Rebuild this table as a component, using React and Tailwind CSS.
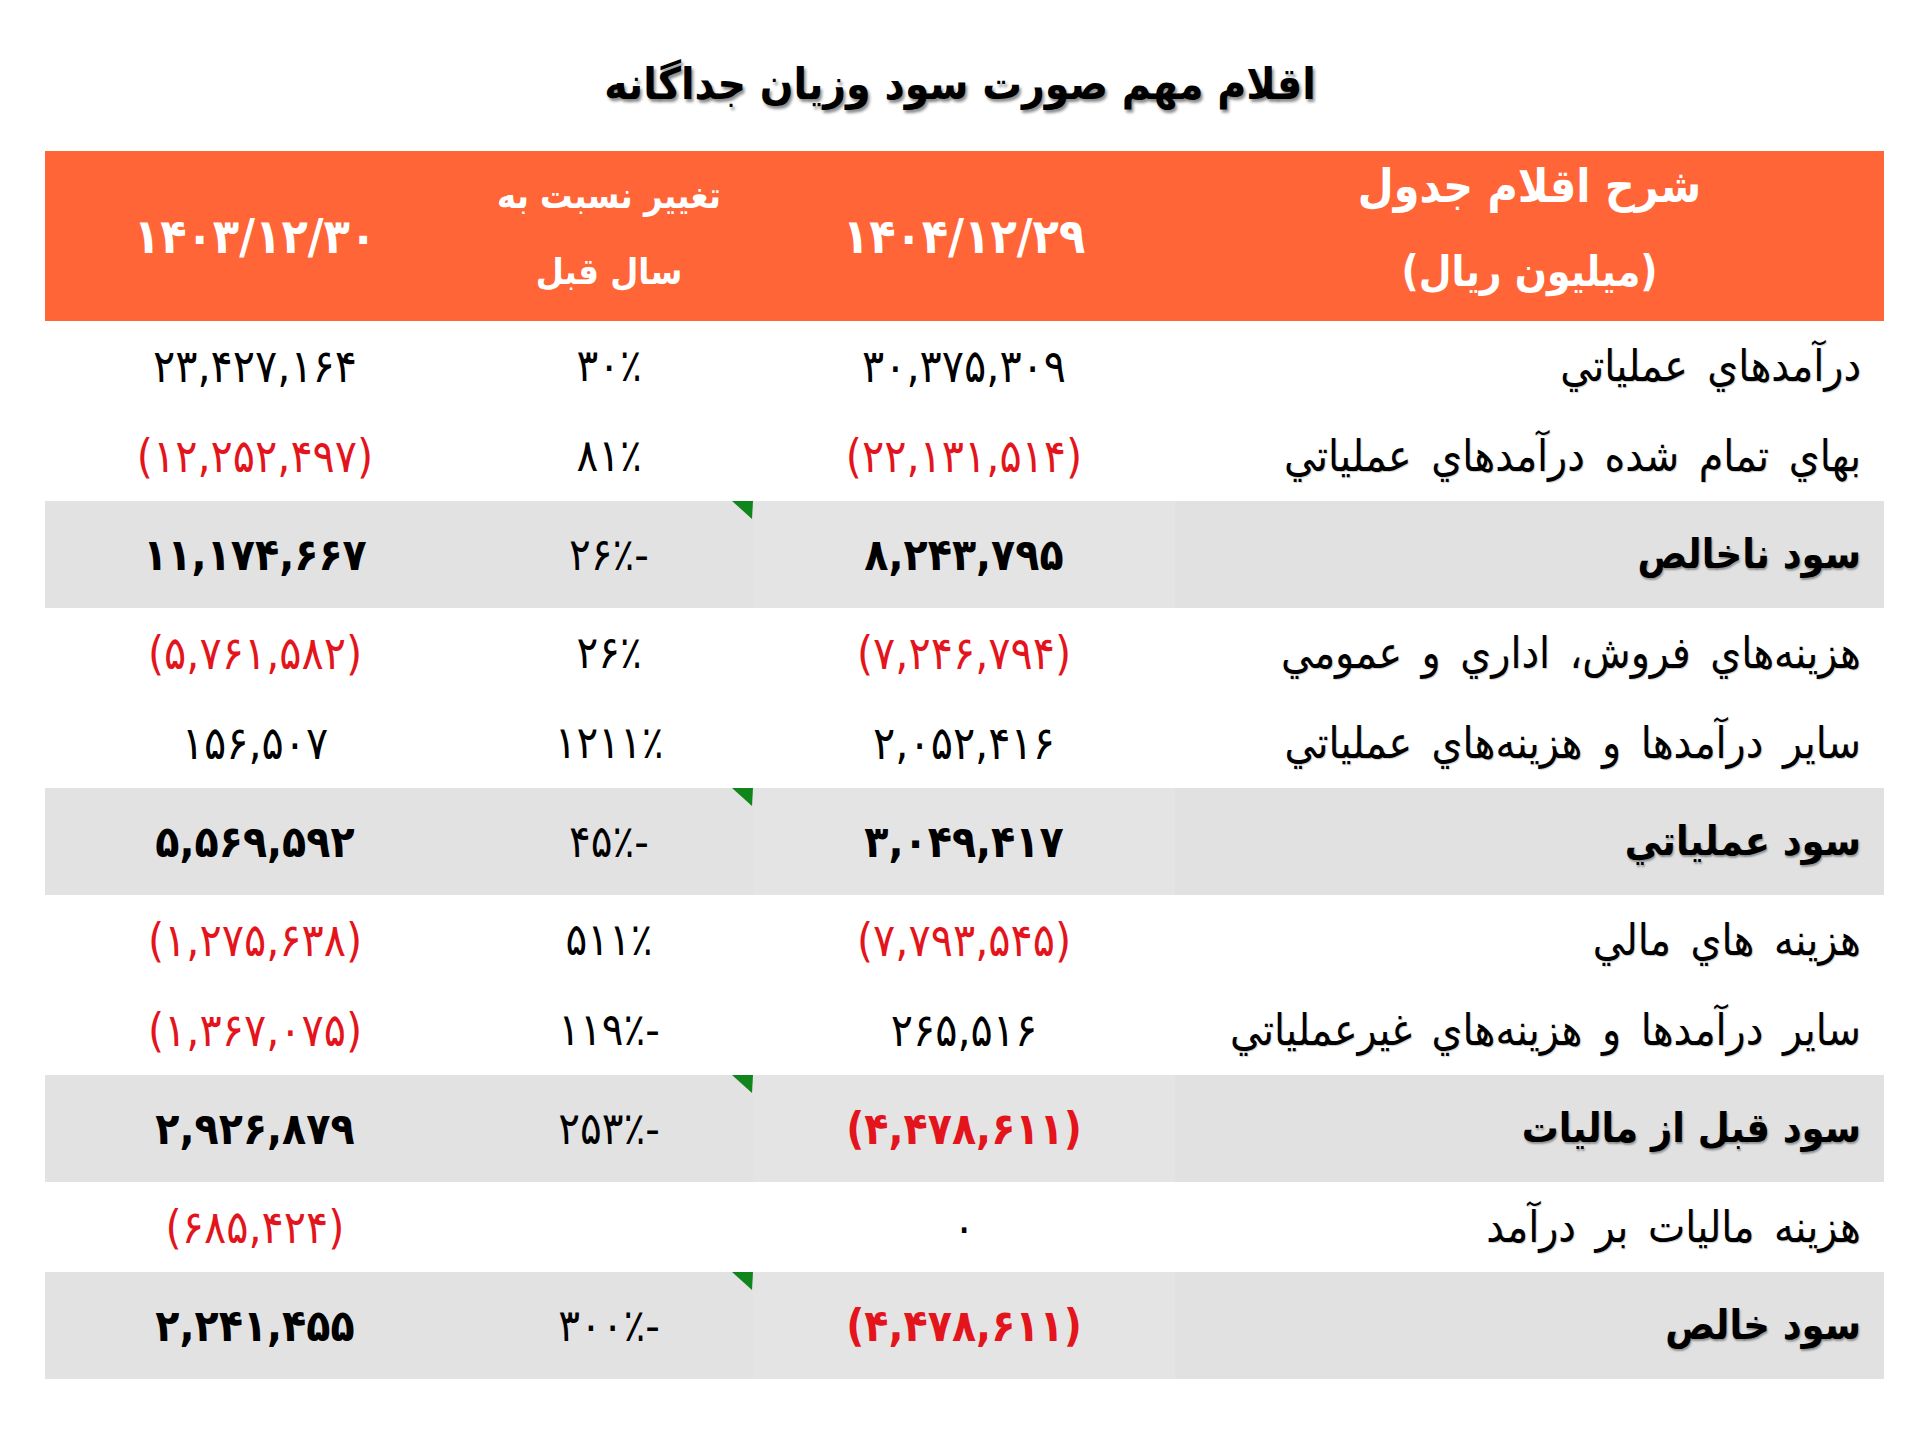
import React from "react";

const rows = [
  { label: "درآمدهاي عملياتي", a: "۳۰,۳۷۵,۳۰۹", c: "۳۰٪", b: "۲۳,۴۲۷,۱۶۴" },
  { label: "بهاي تمام شده درآمدهاي عملياتي", a: "(۲۲,۱۳۱,۵۱۴)", aNeg: true, c: "۸۱٪", b: "(۱۲,۲۵۲,۴۹۷)", bNeg: true },
  { label: "سود ناخالص", a: "۸,۲۴۳,۷۹۵", c: "۲۶٪-", b: "۱۱,۱۷۴,۶۶۷", total: true },
  { label: "هزينه‌هاي فروش، اداري و عمومي", a: "(۷,۲۴۶,۷۹۴)", aNeg: true, c: "۲۶٪", b: "(۵,۷۶۱,۵۸۲)", bNeg: true },
  { label: "ساير درآمدها و هزينه‌هاي عملياتي", a: "۲,۰۵۲,۴۱۶", c: "۱۲۱۱٪", b: "۱۵۶,۵۰۷" },
  { label: "سود عملياتي", a: "۳,۰۴۹,۴۱۷", c: "۴۵٪-", b: "۵,۵۶۹,۵۹۲", total: true },
  { label: "هزينه هاي مالي", a: "(۷,۷۹۳,۵۴۵)", aNeg: true, c: "۵۱۱٪", b: "(۱,۲۷۵,۶۳۸)", bNeg: true },
  { label: "ساير درآمدها و هزينه‌هاي غيرعملياتي", a: "۲۶۵,۵۱۶", c: "۱۱۹٪-", b: "(۱,۳۶۷,۰۷۵)", bNeg: true },
  { label: "سود قبل از ماليات", a: "(۴,۴۷۸,۶۱۱)", aNeg: true, c: "۲۵۳٪-", b: "۲,۹۲۶,۸۷۹", total: true },
  { label: "هزينه ماليات بر درآمد", a: "۰", c: "", b: "(۶۸۵,۴۲۴)", bNeg: true },
  { label: "سود خالص", a: "(۴,۴۷۸,۶۱۱)", aNeg: true, c: "۳۰۰٪-", b: "۲,۲۴۱,۴۵۵", total: true },
];

function Tri() {
  return (
    <svg className="absolute right-0 top-0" width="21" height="18" viewBox="0 0 21 18">
      <polygon points="0,0 21,0 20,18" fill="#10851c" />
    </svg>
  );
}

function Row({ r }) {
  const h = r.total ? "h-[107px]" : "h-[90px]";
  const bg = r.total ? "bg-[#e2e2e2]" : "bg-white";
  const numCls = r.total ? "font-bold text-[44px]" : "font-normal text-[46px]";
  return (
    <div className={`grid grid-cols-[709px_422px_288px_420px] ${h}`}>
      <div
        className={`flex items-center justify-start whitespace-nowrap pr-[23px] text-black ${
          r.total
            ? "bg-[#e1e1e1] text-[41px] font-bold [text-shadow:1px_2px_2px_rgba(0,0,0,0.35)]"
            : "bg-white text-[44px] [word-spacing:7px] [text-shadow:1px_1px_1px_rgba(0,0,0,0.2)]"
        }`}
      >
        {r.label}
      </div>
      <div className={`flex items-center justify-center ${r.total ? "bg-[#e4e4e4]" : "bg-white"}`}>
        <span dir="ltr" className={`${numCls} ${r.aNeg ? "text-[#e3141b]" : "text-black"}`}>
          {r.a}
        </span>
      </div>
      <div className={`relative flex items-center justify-center ${bg}`}>
        {r.total && <Tri />}
        <span dir="ltr" className="text-[45px] text-black">
          {r.c}
        </span>
      </div>
      <div className={`flex items-center justify-center ${bg}`}>
        <span dir="ltr" className={`${numCls} ${r.bNeg ? "text-[#e3141b]" : "text-black"}`}>
          {r.b}
        </span>
      </div>
    </div>
  );
}

export default function App() {
  return (
    <div className="min-h-[1436px] w-full bg-white font-['DejaVu_Sans_Condensed','DejaVu_Sans',sans-serif]">
      <div className="flex h-[151px] items-center justify-center pt-[16px]">
        <h1
          dir="rtl"
          className="text-[44px] font-bold text-black [text-shadow:2px_3px_3px_rgba(0,0,0,0.45)]"
        >
          اقلام مهم صورت سود وزيان جداگانه
        </h1>
      </div>
      <div dir="rtl" className="ml-[45px] w-[1839px]">
        <div className="grid h-[170px] grid-cols-[709px_422px_288px_420px] bg-[#ff6536] font-bold text-white">
          <div className="flex flex-col items-center justify-center gap-[40px] pb-[14px] leading-[46px]">
            <div className="text-[46px]">شرح اقلام جدول</div>
            <div className="text-[42px]">(ميليون ريال)</div>
          </div>
          <div className="flex items-center justify-center text-[48px]">
            <span dir="ltr">۱۴۰۴/۱۲/۲۹</span>
          </div>
          <div className="flex flex-col items-center justify-center gap-[34px] pb-[4px] text-[36px] leading-[42px]">
            <div>تغيير نسبت به</div>
            <div>سال قبل</div>
          </div>
          <div className="flex items-center justify-center text-[48px]">
            <span dir="ltr">۱۴۰۳/۱۲/۳۰</span>
          </div>
        </div>
        {rows.map((r, i) => (
          <Row key={i} r={r} />
        ))}
      </div>
    </div>
  );
}
